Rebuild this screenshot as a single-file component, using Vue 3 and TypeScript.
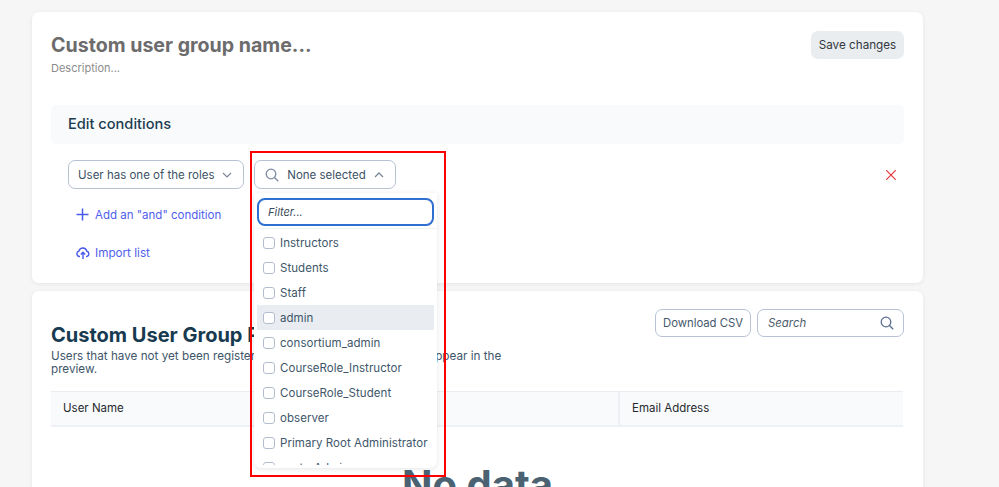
<script setup lang="ts">
const options: string[] = ['Instructors','Students','Staff','admin','consortium_admin','CourseRole_Instructor','CourseRole_Student','observer','Primary Root Administrator','sectorAdmin']
</script>

<template>
  <div class="page">
    <section class="card card-top">
      <header class="top-head">
        <div>
          <h1 class="name">Custom user group name...</h1>
          <p class="desc">Description...</p>
        </div>
        <button class="save">Save changes</button>
      </header>
      <div class="bar">Edit conditions</div>
      <div class="cond">
        <div class="left">
          <div class="select first">
            <span>User has one of the roles</span>
            <svg width="10" height="10" viewBox="0 0 10 10" fill="none" stroke="#7b8899" stroke-width="1.200"><path d="M1 3l4 4 4-4"/></svg>
          </div>
          <a class="link add">
            <svg width="13" height="13" viewBox="0 0 13 13" fill="none" stroke="#4a5be8" stroke-width="1.500"><path d="M6.500 0.500v12M0.500 6.500h12"/></svg>
            <span>Add an "and" condition</span>
          </a>
          <a class="link imp">
            <svg width="14" height="14" viewBox="0 0 14 14" fill="none" stroke="#4a5be8" stroke-width="1.400"><path d="M4 10.500H3.500A2.800 2.800 0 0 1 3 5a4 4 0 0 1 7.800 0.200A2.700 2.700 0 0 1 10.500 10.500H10M7 13V6.500M4.800 8.500L7 6.300l2.200 2.200"/></svg>
            <span>Import list</span>
          </a>
        </div>
        <div class="select second">
          <svg width="14" height="14" viewBox="0 0 14 14" fill="none" stroke="#7c8aa3" stroke-width="1.300"><circle cx="6" cy="6" r="4.800"/><path d="M9.500 9.500L13.200 13.200"/></svg>
          <span class="none">None selected</span>
          <svg width="10" height="10" viewBox="0 0 10 10" fill="none" stroke="#7b8899" stroke-width="1.300"><path d="M1 7l4-4 4 4"/></svg>
        </div>
        <svg class="remove" width="10" height="10" viewBox="0 0 10 10" fill="none" stroke="#e8333c" stroke-width="1.200"><path d="M0.300 0.300l9.400 9.400M9.700 0.300l-9.400 9.400"/></svg>
      </div>
    </section>

    <section class="card card-bottom">
      <div class="prev-head">
        <div class="prev-text">
          <h2>Custom User Group Preview</h2>
          <p>Users that have not yet been registered in your root account will not appear in the preview.</p>
        </div>
        <div class="tools">
          <button class="csv">Download CSV</button>
          <div class="search">
            <span>Search</span>
            <svg width="14" height="14" viewBox="0 0 14 14" fill="none" stroke="#5c6f92" stroke-width="1.300"><circle cx="6" cy="6" r="4.800"/><path d="M9.500 9.500L13.200 13.200"/></svg>
          </div>
        </div>
      </div>
      <div class="thead">
        <div class="th c1">User Name</div>
        <div class="th c2">Display Name</div>
        <div class="th c3">Email Address</div>
      </div>
      <div class="nodata">No data</div>
    </section>

    <div class="panel">
      <div class="filter-wrap"><div class="filter">Filter...</div></div>
      <ul class="list">
        <li v-for="o in options" :key="o" :class="{ hover: o === 'admin' }">
          <span class="check"></span>
          <span>{{ o }}</span>
        </li>
      </ul>
    </div>
    <div class="highlight"></div>
  </div>
</template>

<style>
html, body { margin: 0; height: 100%; overflow: hidden; background: #f6f6f7; }
</style>

<style scoped>
.page {
  position: relative;
  height: 487px;
  width: 999px;
  overflow: hidden;
  box-sizing: border-box;
  padding: 12px 76px 0 32px;
  background: #f6f6f7;
  font-family: Inter, "Liberation Sans", sans-serif;
  display: flex;
  flex-direction: column;
  gap: 8px;
}
.card {
  background: #fff;
  border-radius: 7px;
  box-shadow: 0 1px 4px rgba(30, 40, 60, 0.08);
  box-sizing: border-box;
  padding: 0 19px;
  flex: none;
}
.card-top { height: 271px; }
.card-bottom { height: 260px; }
.top-head { display: flex; justify-content: space-between; padding-top: 19px; height: 93px; box-sizing: border-box; }
.name { margin: 0; font-size: 19.600px; line-height: 28px; font-weight: 700; color: #6c6c6c; }
.desc { margin: 1px 0 0; font-size: 11px; line-height: 16px; color: #8c8c8c; }
.save {
  width: 93px; height: 28px; border: 0; border-radius: 7px; background: #e9edf0;
  font: 11.700px Inter, sans-serif; color: #33383f; padding: 0;
}
.bar {
  height: 39px; line-height: 39px; padding-left: 17px; background: #f9fafb; border-radius: 5px;
  font-size: 14.600px; font-weight: 500; color: #1c3c50;
}
.cond { position: relative; display: flex; gap: 10px; padding: 16px 0 0 17px; }
.left { display: flex; flex-direction: column; }
.select {
  height: 29px; box-sizing: border-box; border: 1px solid #b8c2d4; border-radius: 7px;
  display: flex; align-items: center; font-size: 11.500px; color: #3d5266; background: #fff; white-space: nowrap;
}
.first { width: 176px; padding: 0 11px 0 9px; justify-content: space-between; }
.second { width: 142px; padding: 0 11px 0 10px; justify-content: space-between; }
.link { display: flex; align-items: center; gap: 6px; font-size: 11.500px; color: #4f60ec; padding-left: 8px; white-space: nowrap; }
.add { margin-top: 17px; height: 17px; }
.imp { margin-top: 21px; height: 17px; gap: 5px; font-size: 11.700px; }
.remove { position: absolute; right: 8px; top: 26px; }
.prev-head { display: flex; justify-content: space-between; height: 100px; box-sizing: border-box; padding-top: 18px; }
.prev-text { width: 455px; padding-top: 13px; }
.prev-text h2 { margin: 0; font-size: 20px; line-height: 26px; font-weight: 700; color: #173a50; white-space: nowrap; }
.prev-text p { margin: 2px 0 0; font-size: 11.700px; line-height: 13px; color: #40566a; }
.tools { display: flex; gap: 6px; }
.csv {
  width: 96px; height: 28px; box-sizing: border-box; border: 1px solid #b8c2d4; border-radius: 7px; background: #fff;
  font: 11.300px Inter, sans-serif; color: #44586c; padding: 0;
}
.search {
  width: 147px; height: 28px; box-sizing: border-box; border: 1px solid #b8c2d4; border-radius: 7px;
  display: flex; justify-content: space-between; align-items: center; padding: 0 9px 0 10px;
  font-size: 11.400px; font-style: italic; color: #4c5c6c;
}
.thead {
  display: grid; grid-template-columns: 284px 285px 283px; height: 36px; width: 852px; box-sizing: border-box;
  background: #f9fafb; border-top: 1px solid #e9edf2; border-bottom: 2px solid #edf0f4;
  font-size: 11.500px; color: #26292e;
}
.th { padding-left: 12px; line-height: 32px; border-right: 2px solid #edf0f4; }
.c3 { border-right: 0; }
.nodata { margin-top: 34px; text-align: center; font-size: 40px; line-height: 48px; font-weight: 700; color: #4b6272; }
.panel {
  position: absolute; left: 254px; top: 193px; width: 183px; height: 275px; background: #fff;
  border-radius: 0 0 7px 7px; box-shadow: 0 1px 5px rgba(30, 40, 60, 0.12); overflow: hidden;
}
.filter-wrap { height: 36px; box-sizing: border-box; padding: 5px 3px 0; border-bottom: 1px solid #f0f2f5; }
.filter {
  width: 177px; height: 28px; box-sizing: border-box; border: 2px solid #2e6fd0; border-radius: 8px;
  font-size: 11px; line-height: 24px; font-style: italic; color: #3c4c5c; padding-left: 9px;
}
.list { list-style: none; margin: 0; padding: 1px 3px 0; height: 236px; box-sizing: border-box; overflow: hidden; }
.list li {
  height: 25px; box-sizing: border-box; display: flex; align-items: center; gap: 5px; padding-left: 6px;
  font-size: 11.500px; color: #40566a; letter-spacing: 0.05px; white-space: nowrap; width: 177px;
}
.list li.hover { background: #e9ecf0; }
.check { width: 12px; height: 12px; box-sizing: border-box; flex: none; border: 1px solid #b4bdce; border-radius: 3px; background: #fff; }
.highlight { position: absolute; left: 250px; top: 151px; width: 196px; height: 326px; box-sizing: border-box; border: 2px solid #f00; pointer-events: none; }
</style>
